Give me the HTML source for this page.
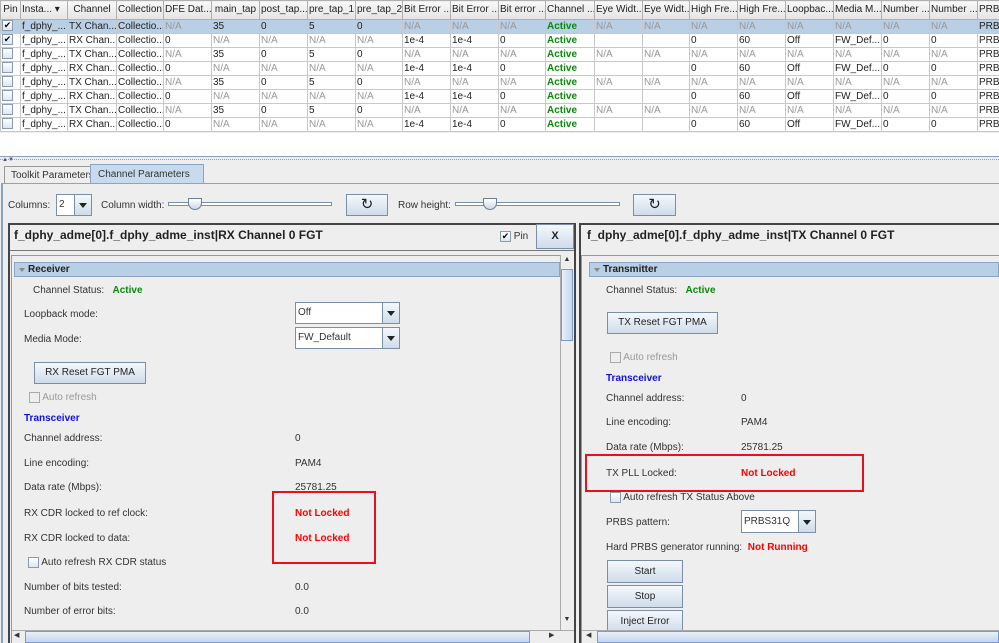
<!DOCTYPE html>
<html><head><meta charset="utf-8"><style>
*{box-sizing:border-box;margin:0;padding:0}
body{width:999px;height:643px;overflow:hidden;background:#eeeeee;font-family:"Liberation Sans",sans-serif;font-size:10px;color:#333;position:relative}
.a{position:absolute;white-space:nowrap}
table{position:absolute;left:0;top:0;border-collapse:collapse;table-layout:fixed;background:#fff}
td,th{height:14px;border:1px solid #c8c8c8;overflow:hidden;white-space:nowrap;font-weight:normal;padding:0 1px;font-size:10px;text-align:left;color:#222;line-height:12px}
th{height:19px;background:linear-gradient(#f8f8f8,#e4e4e4);border-color:#b0b0b0;text-align:center}
.g{color:#999}.act{color:#0a8a0a;font-weight:bold}
tr.sel td{background:#b8cfe5}
.cb{display:inline-block;width:11px;height:11px;border:1px solid #8a9ab0;background:linear-gradient(#fff,#dde6f0);vertical-align:middle;font-size:9px;line-height:9px;text-align:center;color:#000}
.btn{position:absolute;border:1px solid #7a8ea8;background:linear-gradient(#f4f8fc,#cfdcea);text-align:center;font-size:10px;color:#222;white-space:nowrap}
.combo{position:absolute;border:1px solid #7a8ea8;background:#fff;font-size:10px}
.combo .ar{position:absolute;right:0;top:0;bottom:0;width:17px;border-left:1px solid #7a8ea8;background:linear-gradient(#f4f8fc,#cfdcea)}
.combo .ar:after{content:"";position:absolute;left:4px;top:50%;margin-top:-2px;border-left:4px solid transparent;border-right:4px solid transparent;border-top:5px solid #222}
.lbl{position:absolute;font-size:10px;color:#333;white-space:nowrap}
.red{color:#f00;font-weight:bold}
.blue{color:#1010e0;font-weight:bold}
.hdr{position:absolute;height:15px;background:#b8cfe5;border:1px solid #8aa4c4;font-weight:bold;font-size:10px;color:#222;padding-left:13px;line-height:13px}
.hdr:before{content:"";position:absolute;left:4px;top:5px;border-left:3px solid transparent;border-right:3px solid transparent;border-top:4px solid #888}
.slider{position:absolute;height:4px;border:1px solid #7a8ea8;background:#fff}
.thumb{position:absolute;width:14px;height:12px;border:1px solid #6a7e98;background:linear-gradient(#fff,#cdd9e6);border-radius:0 0 7px 7px}
</style></head><body>
<table style="width:999px">
<colgroup><col style="width:20px"><col style="width:47px"><col style="width:49px"><col style="width:47px"><col style="width:48px"><col style="width:48px"><col style="width:48px"><col style="width:48px"><col style="width:47px"><col style="width:48px"><col style="width:48px"><col style="width:47px"><col style="width:49px"><col style="width:48px"><col style="width:47px"><col style="width:48px"><col style="width:48px"><col style="width:48px"><col style="width:48px"><col style="width:48px"><col style="width:48px"><col style="width:22px"></colgroup>
<tr><th>Pin</th><th style="text-align:left">Insta... ▾</th><th>Channel</th><th>Collection</th><th>DFE Dat...</th><th>main_tap</th><th>post_tap...</th><th>pre_tap_1</th><th>pre_tap_2</th><th>Bit Error ...</th><th>Bit Error ...</th><th>Bit error ...</th><th>Channel ...</th><th>Eye Widt...</th><th>Eye Widt...</th><th>High Fre...</th><th>High Fre...</th><th>Loopbac...</th><th>Media M...</th><th>Number ...</th><th>Number ...</th><th style="text-align:left">PRB</th></tr>
<tr class="sel"><td><span class="cb">✔</span></td><td>f_dphy_...</td><td>TX Chan...</td><td>Collectio...</td><td class="g">N/A</td><td>35</td><td>0</td><td>5</td><td>0</td><td class="g">N/A</td><td class="g">N/A</td><td class="g">N/A</td><td class="act">Active</td><td class="g">N/A</td><td class="g">N/A</td><td class="g">N/A</td><td class="g">N/A</td><td class="g">N/A</td><td class="g">N/A</td><td class="g">N/A</td><td class="g">N/A</td><td>PRBS</td></tr>
<tr><td><span class="cb">✔</span></td><td>f_dphy_...</td><td>RX Chan...</td><td>Collectio...</td><td>0</td><td class="g">N/A</td><td class="g">N/A</td><td class="g">N/A</td><td class="g">N/A</td><td>1e-4</td><td>1e-4</td><td>0</td><td class="act">Active</td><td></td><td></td><td>0</td><td>60</td><td>Off</td><td>FW_Def...</td><td>0</td><td>0</td><td>PRBS</td></tr>
<tr><td><span class="cb"></span></td><td>f_dphy_...</td><td>TX Chan...</td><td>Collectio...</td><td class="g">N/A</td><td>35</td><td>0</td><td>5</td><td>0</td><td class="g">N/A</td><td class="g">N/A</td><td class="g">N/A</td><td class="act">Active</td><td class="g">N/A</td><td class="g">N/A</td><td class="g">N/A</td><td class="g">N/A</td><td class="g">N/A</td><td class="g">N/A</td><td class="g">N/A</td><td class="g">N/A</td><td>PRBS</td></tr>
<tr><td><span class="cb"></span></td><td>f_dphy_...</td><td>RX Chan...</td><td>Collectio...</td><td>0</td><td class="g">N/A</td><td class="g">N/A</td><td class="g">N/A</td><td class="g">N/A</td><td>1e-4</td><td>1e-4</td><td>0</td><td class="act">Active</td><td></td><td></td><td>0</td><td>60</td><td>Off</td><td>FW_Def...</td><td>0</td><td>0</td><td>PRBS</td></tr>
<tr><td><span class="cb"></span></td><td>f_dphy_...</td><td>TX Chan...</td><td>Collectio...</td><td class="g">N/A</td><td>35</td><td>0</td><td>5</td><td>0</td><td class="g">N/A</td><td class="g">N/A</td><td class="g">N/A</td><td class="act">Active</td><td class="g">N/A</td><td class="g">N/A</td><td class="g">N/A</td><td class="g">N/A</td><td class="g">N/A</td><td class="g">N/A</td><td class="g">N/A</td><td class="g">N/A</td><td>PRBS</td></tr>
<tr><td><span class="cb"></span></td><td>f_dphy_...</td><td>RX Chan...</td><td>Collectio...</td><td>0</td><td class="g">N/A</td><td class="g">N/A</td><td class="g">N/A</td><td class="g">N/A</td><td>1e-4</td><td>1e-4</td><td>0</td><td class="act">Active</td><td></td><td></td><td>0</td><td>60</td><td>Off</td><td>FW_Def...</td><td>0</td><td>0</td><td>PRBS</td></tr>
<tr><td><span class="cb"></span></td><td>f_dphy_...</td><td>TX Chan...</td><td>Collectio...</td><td class="g">N/A</td><td>35</td><td>0</td><td>5</td><td>0</td><td class="g">N/A</td><td class="g">N/A</td><td class="g">N/A</td><td class="act">Active</td><td class="g">N/A</td><td class="g">N/A</td><td class="g">N/A</td><td class="g">N/A</td><td class="g">N/A</td><td class="g">N/A</td><td class="g">N/A</td><td class="g">N/A</td><td>PRBS</td></tr>
<tr><td><span class="cb"></span></td><td>f_dphy_...</td><td>RX Chan...</td><td>Collectio...</td><td>0</td><td class="g">N/A</td><td class="g">N/A</td><td class="g">N/A</td><td class="g">N/A</td><td>1e-4</td><td>1e-4</td><td>0</td><td class="act">Active</td><td></td><td></td><td>0</td><td>60</td><td>Off</td><td>FW_Def...</td><td>0</td><td>0</td><td>PRBS</td></tr>
</table>
<div class="a" style="left:0;top:133px;width:999px;height:24px;background:#fff;border-bottom:1px solid #8aa4c4"></div>
<div class="a" style="left:0;top:158px;width:999px;height:2px;border-bottom:1px dotted #99a"></div>
<div class="a" style="left:2px;top:157px;font-size:6px;color:#557">▲▼</div>
<!-- tabs -->
<div class="a" style="left:4px;top:166px;width:87px;height:17px;border:1px solid #999;border-bottom:none;background:#eee;font-size:10px;padding:3px 0 0 6px;overflow:hidden">Toolkit Parameters</div>
<div class="a" style="left:90px;top:164px;width:114px;height:20px;border:1px solid #8aa4c4;border-bottom:none;background:#c8dbee;font-size:10px;padding:4px 0 0 7px">Channel Parameters</div>
<div class="a" style="left:1px;top:183px;width:998px;height:460px;border-top:1px solid #8aa4c4;border-left:2px solid #8aa4c4"></div>
<!-- toolbar -->
<div class="lbl" style="left:8px;top:200px">Columns:</div>
<div class="combo" style="left:56px;top:194px;width:36px;height:22px;padding:4px 2px">2<div class="ar"></div></div>
<div class="lbl" style="left:101px;top:200px">Column width:</div>
<div class="slider" style="left:168px;top:202px;width:164px"></div><div class="thumb" style="left:188px;top:198px"></div>
<div class="btn" style="left:346px;top:194px;width:42px;height:22px;font-size:15px;line-height:19px">↻</div>
<div class="lbl" style="left:398px;top:200px">Row height:</div>
<div class="slider" style="left:455px;top:202px;width:165px"></div><div class="thumb" style="left:483px;top:198px"></div>
<div class="btn" style="left:633px;top:194px;width:43px;height:22px;font-size:15px;line-height:19px">↻</div>
<!-- left panel -->
<div class="a" style="left:8px;top:223px;width:568px;height:420px;border:2px solid #444;border-bottom:none;background:#eee"></div>
<div class="a" style="left:14px;top:228px;font-size:12px;font-weight:bold;color:#222">f_dphy_adme[0].f_dphy_adme_inst|RX Channel 0 FGT</div>
<div class="lbl" style="left:500px;top:231px"><span class="cb">✔</span> Pin</div>
<div class="btn" style="left:536px;top:224px;width:38px;height:25px;font-weight:bold;font-size:11px;line-height:23px">X</div>
<div class="a" style="left:10px;top:250px;width:564px;height:1px;background:#777"></div>
<div class="a" style="left:11px;top:255px;width:563px;height:388px;border:1px solid #999"></div>
<div class="hdr" style="left:14px;top:262px;width:546px">Receiver</div>
<div class="a" style="left:560px;top:255px;width:14px;height:375px;background:#eee;border-left:1px solid #aaa"></div>
<div class="a" style="left:561px;top:256px;width:12px;height:12px;font-size:7px;text-align:center">▲</div>
<div class="a" style="left:561px;top:269px;width:12px;height:72px;border:1px solid #7a9ad0;background:linear-gradient(90deg,#e8f0fa,#c4d6ec)"></div>
<div class="a" style="left:561px;top:616px;width:12px;height:12px;font-size:7px;text-align:center">▼</div>
<div class="lbl" style="left:33px;top:285px">Channel Status:&nbsp;&nbsp; <span class="act">Active</span></div>
<div class="lbl" style="left:24px;top:309px">Loopback mode:</div>
<div class="combo" style="left:295px;top:302px;width:105px;height:22px;padding:4px 2px">Off<div class="ar"></div></div>
<div class="lbl" style="left:24px;top:334px">Media Mode:</div>
<div class="combo" style="left:295px;top:327px;width:105px;height:22px;padding:4px 2px">FW_Default<div class="ar"></div></div>
<div class="btn" style="left:34px;top:362px;width:112px;height:22px;line-height:20px">RX Reset FGT PMA</div>
<div class="lbl" style="left:29px;top:392px;color:#999"><span class="cb" style="background:#eee;border-color:#aaa"></span> Auto refresh</div>
<div class="lbl blue" style="left:24px;top:413px">Transceiver</div>
<div class="lbl" style="left:24px;top:433px">Channel address:</div><div class="lbl" style="left:295px;top:433px">0</div>
<div class="lbl" style="left:24px;top:458px">Line encoding:</div><div class="lbl" style="left:295px;top:458px">PAM4</div>
<div class="lbl" style="left:24px;top:482px">Data rate (Mbps):</div><div class="lbl" style="left:295px;top:482px">25781.25</div>
<div class="lbl" style="left:24px;top:508px">RX CDR locked to ref clock:</div><div class="lbl red" style="left:295px;top:508px">Not Locked</div>
<div class="lbl" style="left:24px;top:533px">RX CDR locked to data:</div><div class="lbl red" style="left:295px;top:533px">Not Locked</div>
<div class="a" style="left:272px;top:491px;width:104px;height:73px;border:2px solid #e8101a"></div>
<div class="lbl" style="left:28px;top:557px"><span class="cb"></span> Auto refresh RX CDR status</div>
<div class="lbl" style="left:24px;top:582px">Number of bits tested:</div><div class="lbl" style="left:295px;top:582px">0.0</div>
<div class="lbl" style="left:24px;top:606px">Number of error bits:</div><div class="lbl" style="left:295px;top:606px">0.0</div>
<div class="a" style="left:12px;top:630px;width:562px;height:13px;background:#eee;border-top:1px solid #aaa"></div>
<div class="a" style="left:25px;top:631px;width:505px;height:12px;border:1px solid #7a9ad0;background:linear-gradient(#e8f0fa,#c4d6ec)"></div>
<div class="a" style="left:14px;top:631px;font-size:7px">◀</div><div class="a" style="left:549px;top:631px;font-size:7px">▶</div>
<!-- right panel -->
<div class="a" style="left:579px;top:223px;width:422px;height:420px;border:2px solid #444;border-right:none;border-bottom:none;background:#eee"></div>
<div class="a" style="left:587px;top:228px;font-size:12px;font-weight:bold;color:#222">f_dphy_adme[0].f_dphy_adme_inst|TX Channel 0 FGT</div>
<div class="a" style="left:581px;top:255px;width:418px;height:388px;border:1px solid #999;border-right:none"></div>
<div class="hdr" style="left:589px;top:262px;width:410px">Transmitter</div>
<div class="lbl" style="left:606px;top:285px">Channel Status:&nbsp;&nbsp; <span class="act">Active</span></div>
<div class="btn" style="left:607px;top:312px;width:111px;height:22px;line-height:20px">TX Reset FGT PMA</div>
<div class="lbl" style="left:610px;top:352px;color:#999"><span class="cb" style="background:#eee;border-color:#aaa"></span> Auto refresh</div>
<div class="lbl blue" style="left:606px;top:373px">Transceiver</div>
<div class="lbl" style="left:606px;top:393px">Channel address:</div><div class="lbl" style="left:741px;top:393px">0</div>
<div class="lbl" style="left:606px;top:417px">Line encoding:</div><div class="lbl" style="left:741px;top:417px">PAM4</div>
<div class="lbl" style="left:606px;top:442px">Data rate (Mbps):</div><div class="lbl" style="left:741px;top:442px">25781.25</div>
<div class="lbl" style="left:606px;top:468px">TX PLL Locked:</div><div class="lbl red" style="left:741px;top:468px">Not Locked</div>
<div class="a" style="left:585px;top:454px;width:279px;height:38px;border:2px solid #e8101a"></div>
<div class="lbl" style="left:610px;top:492px"><span class="cb"></span> Auto refresh TX Status Above</div>
<div class="lbl" style="left:606px;top:517px">PRBS pattern:</div>
<div class="combo" style="left:741px;top:510px;width:75px;height:23px;padding:5px 2px">PRBS31Q<div class="ar"></div></div>
<div class="lbl" style="left:606px;top:542px">Hard PRBS generator running:&nbsp; <span class="red">Not Running</span></div>
<div class="btn" style="left:607px;top:560px;width:76px;height:23px;line-height:21px">Start</div>
<div class="btn" style="left:607px;top:585px;width:76px;height:23px;line-height:21px">Stop</div>
<div class="btn" style="left:607px;top:610px;width:76px;height:23px;line-height:21px">Inject Error</div>
<div class="a" style="left:582px;top:630px;width:417px;height:13px;background:#eee;border-top:1px solid #aaa"></div>
<div class="a" style="left:597px;top:631px;width:402px;height:12px;border:1px solid #7a9ad0;background:linear-gradient(#e8f0fa,#c4d6ec)"></div>
<div class="a" style="left:586px;top:631px;font-size:7px">◀</div>
</body></html>
